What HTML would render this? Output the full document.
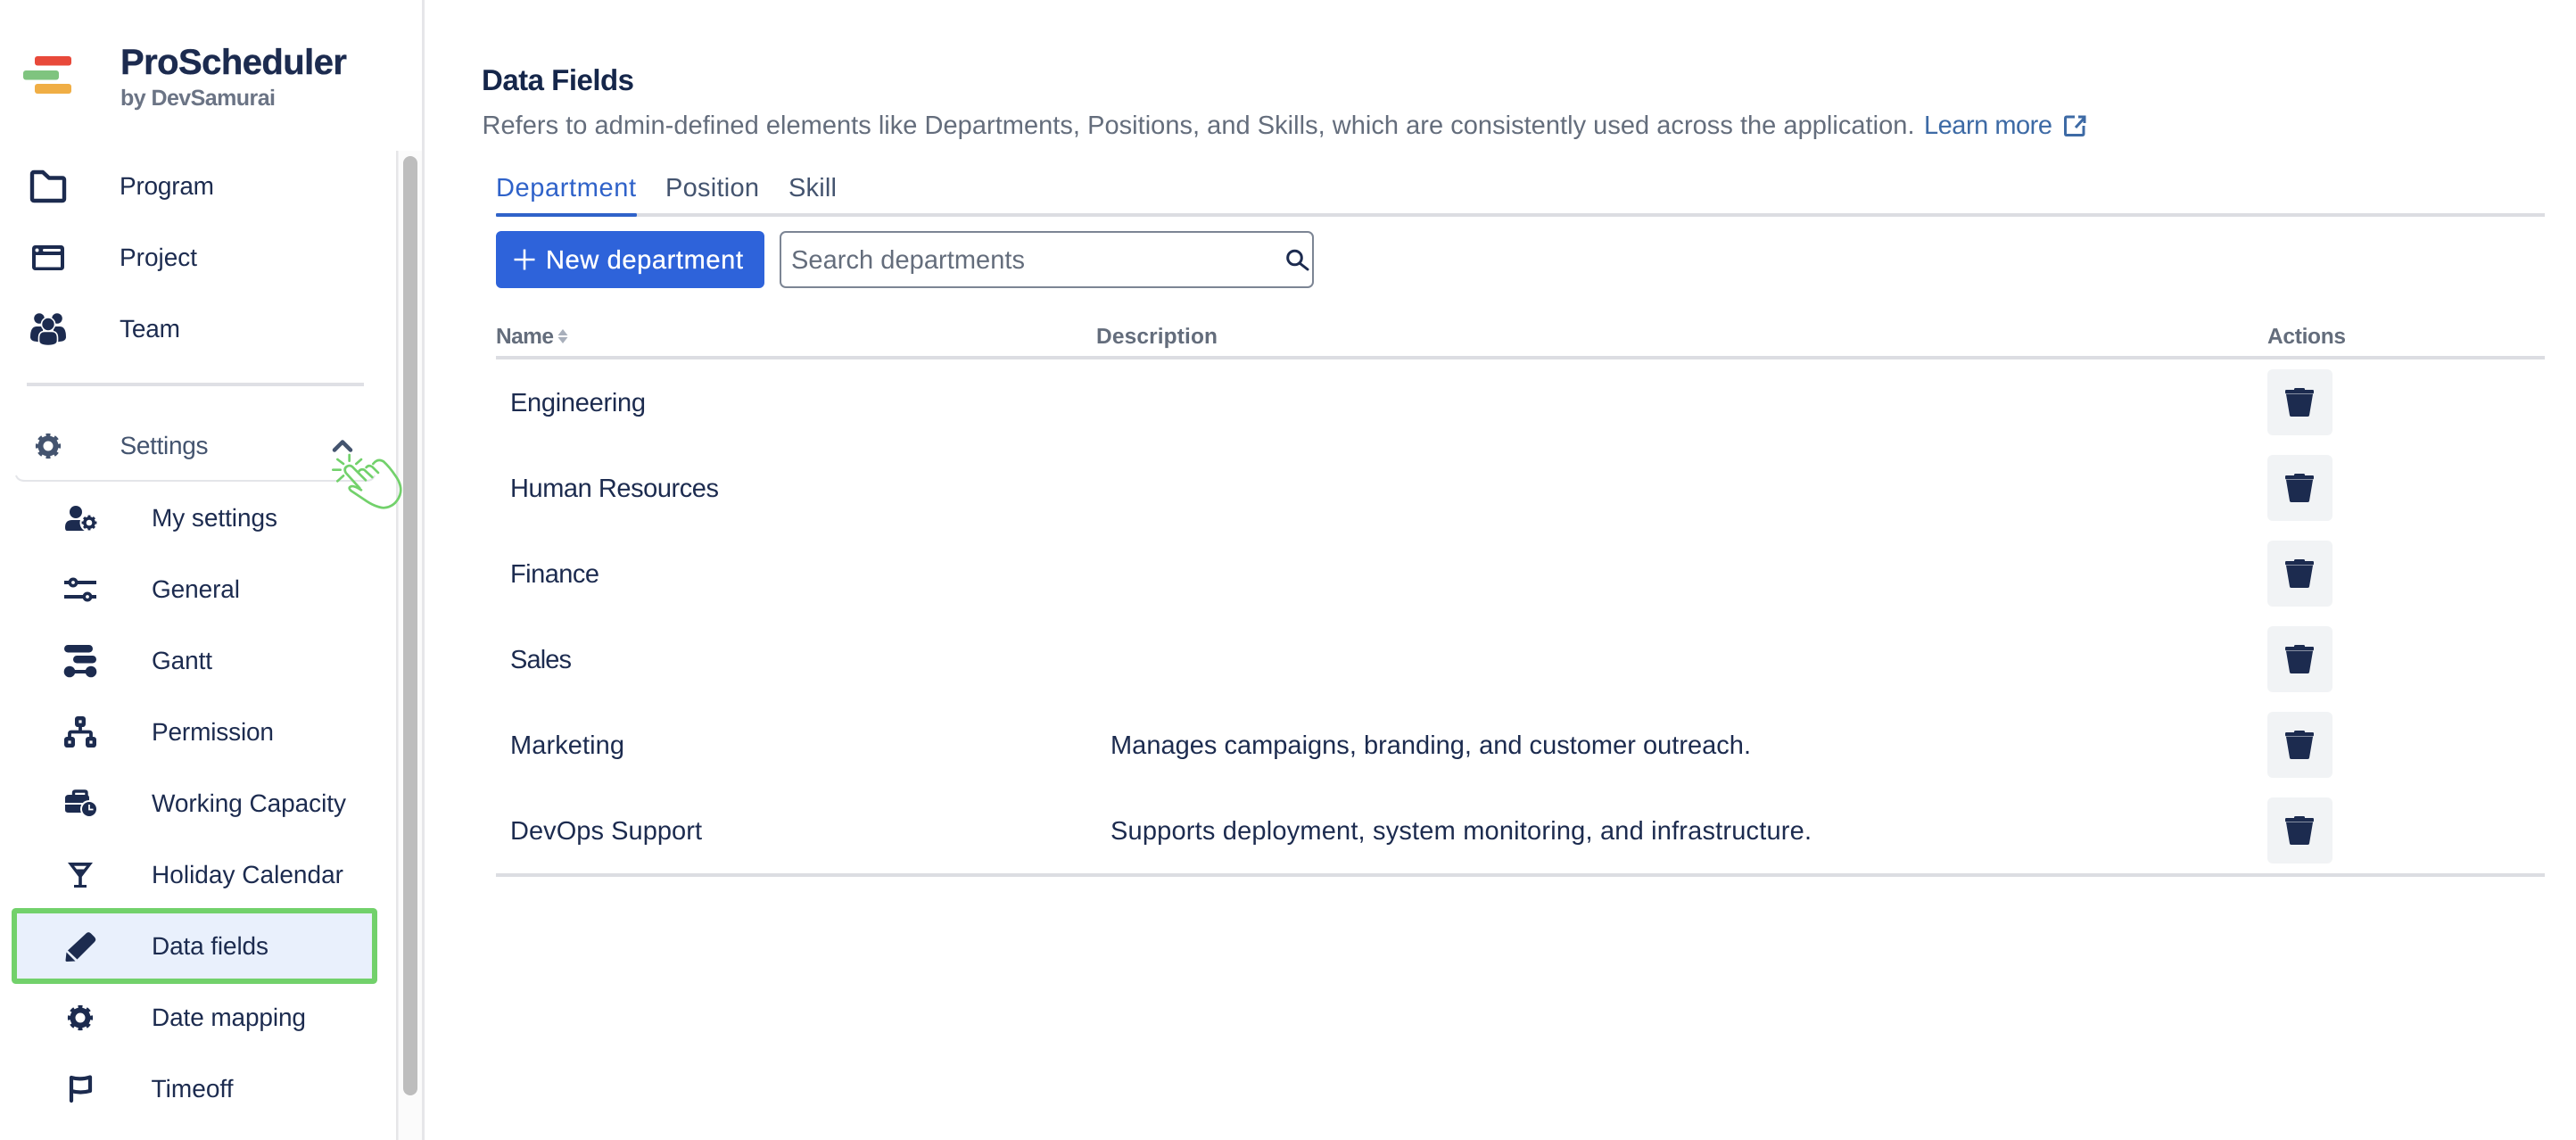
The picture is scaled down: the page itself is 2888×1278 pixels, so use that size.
<!DOCTYPE html>
<html lang="en">
<head>
<meta charset="utf-8">
<title>ProScheduler – Data Fields</title>
<style>
html,body{margin:0;padding:0;background:#fff;width:2888px;height:1278px;overflow:hidden}
svg{display:block;position:absolute;left:0;top:0}
text{font-family:"Liberation Sans",sans-serif;font-size:28px;text-rendering:geometricPrecision}
.n{fill:#1c2b4f}
.m{fill:#1c2b4f;font-size:29px}
.g{fill:#646d7c;font-size:29px}
.t{font-size:29px}
.h{font-size:24.500px;font-weight:700;fill:#646d7c}
</style>
</head>
<body>
<svg width="2888" height="1278" viewBox="0 0 2888 1278" xmlns="http://www.w3.org/2000/svg">
<defs>
<g id="gear">
  <circle r="8.500" fill="none" stroke="currentColor" stroke-width="6"/>
  <circle r="12.400" fill="none" stroke="currentColor" stroke-width="3.400" pathLength="60" stroke-dasharray="3.800 3.700" stroke-dashoffset="1.900"/>
</g>
<g id="trash">
  <rect x="-16" y="-14" width="32" height="4.500" rx="1.200" fill="#1c2b4f"/>
  <rect x="-6" y="-16" width="12" height="4" rx="1.500" fill="#1c2b4f"/>
  <path d="M-15-9H15L11 14.500Q10.800 16 9 16H-9Q-10.800 16-11 14.500Z" fill="#1c2b4f"/>
</g>
</defs>

<!-- sidebar chrome -->
<rect x="446" y="169" width="27" height="1109" fill="#fbfbfb"/>
<rect x="444" y="169" width="2.500" height="1109" fill="#e6e6e8"/>
<rect x="473" y="0" width="3" height="1278" fill="#e6e6e9"/>
<rect x="452" y="175" width="16" height="1053" rx="8" fill="#bdbdbd"/>

<!-- logo -->
<rect x="39" y="63" width="41" height="10.500" rx="3" fill="#e8493a"/>
<rect x="26" y="79" width="40" height="10.500" rx="3" fill="#7fc47f"/>
<rect x="39" y="94" width="41" height="11" rx="3" fill="#f0ae45"/>
<text x="135" y="83" font-weight="700" style="font-size:40px" fill="#1c2b4f" stroke="#1c2b4f" stroke-width=".4" textLength="254">ProScheduler</text>
<text x="135" y="118" font-weight="700" style="font-size:25px" fill="#6b7485" textLength="174">by DevSamurai</text>

<!-- main nav -->
<path d="M36 195Q36 193 38 193H48L55 199.500H70Q72 199.500 72 201.500V223Q72 225 70 225H38Q36 225 36 223Z" fill="none" stroke="#1c2b4f" stroke-width="4.400" stroke-linejoin="round"/>
<text class="n" x="134" y="218" textLength="106">Program</text>

<rect x="36" y="275" width="36" height="28" rx="3.500" fill="#1c2b4f"/>
<rect x="40" y="286" width="28" height="13.500" fill="#fff"/>
<circle cx="41.500" cy="280.500" r="2" fill="#fff"/>
<rect x="48" y="279" width="20" height="3" rx="1.500" fill="#fff"/>
<text class="n" x="134" y="298" textLength="87">Project</text>

<circle cx="44" cy="357" r="5.800" fill="#1c2b4f"/>
<circle cx="64" cy="357" r="5.800" fill="#1c2b4f"/>
<path d="M34 378Q34 366 41 366H48V384L38 382.500Q34 381 34 378Z" fill="#1c2b4f"/>
<path d="M74 378Q74 366 67 366H60V384L70 382.500Q74 381 74 378Z" fill="#1c2b4f"/>
<circle cx="54" cy="363.500" r="7.500" fill="#1c2b4f" stroke="#fff" stroke-width="1.600"/>
<path d="M43.500 379Q43.500 371.500 50 371.500H58Q64.500 371.500 64.500 379V382Q64.500 387.500 54 387.500Q43.500 387.500 43.500 382Z" fill="#1c2b4f" stroke="#fff" stroke-width="1.600"/>
<text class="n" x="134" y="378" textLength="68">Team</text>

<rect x="30" y="429" width="378" height="4" fill="#dfe0e5"/>

<!-- settings -->
<use href="#gear" x="54" y="500" style="color:#44546f"/>
<text x="134.500" y="509" fill="#44546f" textLength="99">Settings</text>
<path d="M375 504.500L384 495.500L393 504.500" fill="none" stroke="#44546f" stroke-width="4.500" stroke-linecap="round" stroke-linejoin="round"/>
<path d="M18 533Q20 539 28 539H410Q418 539 420 533" fill="none" stroke="#e4e5e9" stroke-width="2"/>

<!-- sub nav -->
<circle cx="85" cy="574" r="7" fill="#1c2b4f"/>
<path d="M73 591Q73 583 81 583H90Q94 583 96 586V595H75Q73 595 73 591Z" fill="#1c2b4f"/>
<circle cx="100" cy="586" r="10.500" fill="#fff"/>
<use href="#gear" transform="translate(100 586) scale(.6)" style="color:#1c2b4f"/>
<text class="n" x="170" y="590" textLength="141">My settings</text>

<rect x="72" y="651" width="36" height="4" fill="#1c2b4f"/>
<circle cx="82" cy="653" r="3.700" fill="#fff" stroke="#1c2b4f" stroke-width="3.600"/>
<rect x="72" y="667" width="36" height="4" fill="#1c2b4f"/>
<circle cx="98" cy="669" r="3.700" fill="#fff" stroke="#1c2b4f" stroke-width="3.600"/>
<text class="n" x="170" y="670" textLength="99">General</text>

<rect x="72" y="723" width="32" height="8.500" rx="4.200" fill="#1c2b4f"/>
<rect x="82" y="735" width="26" height="8.500" rx="4.200" fill="#1c2b4f"/>
<circle cx="78" cy="753" r="6.300" fill="#1c2b4f"/>
<circle cx="102" cy="753" r="6.300" fill="#1c2b4f"/>
<rect x="78" y="751" width="24" height="4" fill="#1c2b4f"/>
<text class="n" x="170" y="750" textLength="68">Gantt</text>

<g fill="none" stroke="#1c2b4f" stroke-width="4.400" stroke-linejoin="round">
  <rect x="86.200" y="805.200" width="7.600" height="7.600" rx="1"/>
  <rect x="74.200" y="828.200" width="7.600" height="7.600" rx="1"/>
  <rect x="98.200" y="828.200" width="7.600" height="7.600" rx="1"/>
</g>
<path d="M90 814V820.500M78 827V822.500Q78 820.500 80 820.500H100Q102 820.500 102 822.500V827" fill="none" stroke="#1c2b4f" stroke-width="3.800"/>
<text class="n" x="170" y="830" textLength="137">Permission</text>

<path d="M82.500 892V889Q82.500 887 84.500 887H95Q97 887 97 889V892" fill="none" stroke="#1c2b4f" stroke-width="3.400"/>
<path d="M73 895Q73 891 77 891H97Q100 891 100 895V900H73Z" fill="#1c2b4f"/>
<path d="M73 902H100V911H77Q73 911 73 908Z" fill="#1c2b4f"/>
<circle cx="100" cy="907" r="10" fill="#fff"/>
<circle cx="100" cy="907" r="8" fill="#1c2b4f"/>
<path d="M100 902V907.500H104.500" fill="none" stroke="#fff" stroke-width="1.700"/>
<text class="n" x="170" y="910" textLength="218">Working Capacity</text>

<path d="M76 967H104L91.800 983V992H97V995H83V992H88.200V983Z" fill="#1c2b4f"/>
<path d="M83 970.800H97L94 974.500H86Z" fill="#fff"/>
<text class="n" x="170" y="990" textLength="215">Holiday Calendar</text>

<!-- active item -->
<rect x="16" y="1021" width="404" height="79" rx="1.500" fill="#e9f0fc" stroke="#72d16b" stroke-width="6"/>
<path d="M97 1046Q99.500 1044 102 1046.500L106 1050.500Q108.500 1053.500 106 1056L86.500 1075.500L76 1065.500Z" fill="#1c2b4f"/>
<path d="M74.500 1067.500L84.500 1077.500L75 1078Q73.500 1078 73.500 1076.500Z" fill="#1c2b4f"/>
<text class="n" x="170" y="1070" textLength="131">Data fields</text>

<use href="#gear" x="90" y="1141" style="color:#1c2b4f"/>
<text class="n" x="170" y="1150" textLength="173">Date mapping</text>

<path d="M80 1234V1208Q90 1211 101 1207.500V1223Q90 1226 80 1223" fill="none" stroke="#1c2b4f" stroke-width="4.200" stroke-linecap="round" stroke-linejoin="round"/>
<text class="n" x="169.500" y="1230" textLength="92">Timeoff</text>

<!-- hand cursor -->
<g transform="translate(340 470) scale(.3333)" fill="none" stroke="#72d16b" stroke-width="8" stroke-linecap="round" stroke-linejoin="round">
  <path d="M155 120V140M195 135L178 150M115 135L135 150M100 170H125M115 208L135 190"/>
  <path d="M190 232L143 180Q135 165 148 158Q160 152 170 165L210 205"/>
  <path d="M185 178Q192 165 205 170L232 195"/>
  <path d="M212 162Q220 152 232 160L252 180"/>
  <path d="M235 150Q250 130 270 142Q290 160 310 190Q335 225 325 255Q310 295 270 298Q240 295 205 270L160 240Q150 230 160 226Q170 222 195 238"/>
</g>

<!-- header -->
<text x="540" y="101" font-weight="700" style="font-size:33px" fill="#15264a" textLength="171">Data Fields</text>
<text class="g" x="540.500" y="150" textLength="1606">Refers to admin-defined elements like Departments, Positions, and Skills, which are consistently used across the application.</text>
<text class="t" x="2157" y="150" fill="#3d6aa5" textLength="144">Learn more</text>
<path d="M2326 131H2317Q2315.500 131 2315.500 133V150Q2315.500 151.500 2317 151.500H2334Q2336 151.500 2336 150V141M2327 143L2337 132M2330 131H2337V138" fill="none" stroke="#3d6aa5" stroke-width="3"/>

<!-- tabs -->
<text class="t" x="556" y="220" fill="#2f62c9" textLength="157">Department</text>
<text class="t" x="746" y="220" fill="#44546f" textLength="105">Position</text>
<text class="t" x="884" y="220" fill="#44546f" textLength="54">Skill</text>
<rect x="556" y="239" width="2297" height="4" fill="#dcdde2"/>
<rect x="556" y="239" width="158" height="4" rx="1.500" fill="#2f62c9"/>

<!-- toolbar -->
<rect x="556" y="259" width="301" height="64" rx="6" fill="#2e63da"/>
<path d="M588 279.500V302.500M576.500 291H599.500" stroke="#fff" stroke-width="2.600" fill="none"/>
<text class="t" x="612" y="301" fill="#fff" stroke="#fff" stroke-width=".3" textLength="221">New department</text>
<rect x="875" y="260" width="597" height="62" rx="6" fill="#fff" stroke="#7c8594" stroke-width="2"/>
<text class="g" x="887" y="301" textLength="262">Search departments</text>
<circle cx="1451.500" cy="289" r="7.800" fill="none" stroke="#1c2b4f" stroke-width="3"/>
<path d="M1457 295L1466 302" stroke="#1c2b4f" stroke-width="3" stroke-linecap="round"/>

<!-- table header -->
<text class="h" x="556" y="385" textLength="65">Name</text>
<path d="M631 369L636.500 376H625.500Z" fill="#a8afbb"/>
<path d="M631 385L636.500 378H625.500Z" fill="#a8afbb"/>
<text class="h" x="1229" y="385" textLength="136">Description</text>
<text class="h" x="2542" y="385" textLength="88">Actions</text>
<rect x="556" y="399" width="2297" height="4" fill="#dcdde2"/>

<!-- rows -->
<text class="m" x="572" y="461" textLength="152">Engineering</text>
<text class="m" x="572" y="557" textLength="234">Human Resources</text>
<text class="m" x="572" y="653" textLength="100">Finance</text>
<text class="m" x="572" y="749" textLength="69">Sales</text>
<text class="m" x="572" y="845" textLength="128">Marketing</text>
<text class="m" x="1245" y="845" textLength="718">Manages campaigns, branding, and customer outreach.</text>
<text class="m" x="572" y="941" textLength="215">DevOps Support</text>
<text class="m" x="1245" y="941" textLength="786">Supports deployment, system monitoring, and infrastructure.</text>

<g fill="#f1f3f5">
  <rect x="2542" y="414" width="73" height="74" rx="6"/>
  <rect x="2542" y="510" width="73" height="74" rx="6"/>
  <rect x="2542" y="606" width="73" height="74" rx="6"/>
  <rect x="2542" y="702" width="73" height="74" rx="6"/>
  <rect x="2542" y="798" width="73" height="74" rx="6"/>
  <rect x="2542" y="894" width="73" height="74" rx="6"/>
</g>
<use href="#trash" x="2578" y="451"/>
<use href="#trash" x="2578" y="547"/>
<use href="#trash" x="2578" y="643"/>
<use href="#trash" x="2578" y="739"/>
<use href="#trash" x="2578" y="835"/>
<use href="#trash" x="2578" y="931"/>

<rect x="556" y="979" width="2297" height="4" fill="#dcdde2"/>
</svg>
</body>
</html>
